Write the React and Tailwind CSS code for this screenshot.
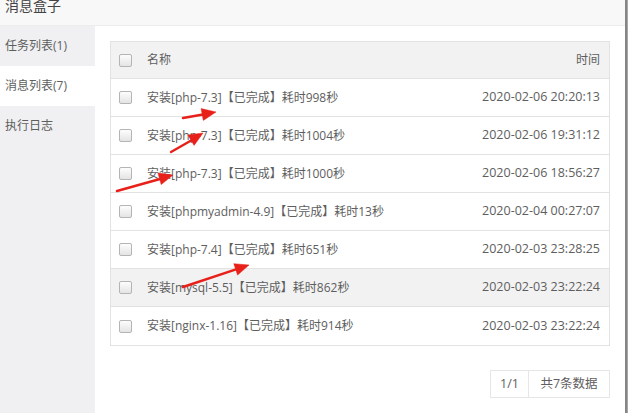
import React from 'react'

const rows = [
  { name: '安装[php-7.3]【已完成】耗时998秒', time: '2020-02-06 20:20:13' },
  { name: '安装[php-7.3]【已完成】耗时1004秒', time: '2020-02-06 19:31:12' },
  { name: '安装[php-7.3]【已完成】耗时1000秒', time: '2020-02-06 18:56:27' },
  { name: '安装[phpmyadmin-4.9]【已完成】耗时13秒', time: '2020-02-04 00:27:07' },
  { name: '安装[php-7.4]【已完成】耗时651秒', time: '2020-02-03 23:28:25' },
  { name: '安装[mysql-5.5]【已完成】耗时862秒', time: '2020-02-03 23:22:24', hover: true },
  { name: '安装[nginx-1.16]【已完成】耗时914秒', time: '2020-02-03 23:22:24' },
]

const tabs = [
  { label: '任务列表(1)' },
  { label: '消息列表(7)', active: true },
  { label: '执行日志' },
]

function Checkbox() {
  return (
    <span className="block h-[13px] w-[13px] rounded-[2px] border border-[#b4b4b4] bg-gradient-to-b from-[#fdfdfd] to-[#e4e4e4]" />
  )
}

// red annotation arrows: [tailX, tailY, baseX, baseY, headPoints]
const arrows = [
  [183, 118, 203, 114.5, '216,112 203.3,120.4 201.1,108.6'],
  [171, 152, 192, 140, '203,133 194.1,145.4 187.9,135'],
  [117, 191, 160, 179, '173,175 161.2,184.6 157.9,173.1'],
  [183, 287, 236, 269.4, '249,265 237.6,275.1 233.8,263.7'],
]

export default function App() {
  return (
    <div className="relative flex h-[413px] w-[628px] overflow-hidden bg-white text-[12px] text-[#5e5e5e]" style={{ fontFamily: '"Open Sans", "Noto Sans CJK SC", sans-serif' }}>
      <div className="flex w-[625px] flex-col">
        <div className="h-[26px] shrink-0 overflow-hidden border-b border-[#ececec] bg-[#f8f8f8] px-[5px]">
          <div className="-mt-[4px] text-[14px] leading-[20px] text-[#444]">消息盒子</div>
        </div>
        <div className="flex flex-1">
          <div className="w-[95px] shrink-0 bg-[#f0f0f2]">
            {tabs.map((t) => (
              <div
                key={t.label}
                className={`flex h-[40px] items-center px-[5px] text-[12px] ${t.active ? 'bg-white' : ''}`}
              >
                {t.label}
              </div>
            ))}
          </div>
          <div className="flex flex-1 flex-col p-[15px]">
            <div className="border border-[#e2e2e2]">
              <div className="flex h-[37px] items-center border-b border-[#e2e2e2] bg-[#f2f2f2]">
                <div className="flex w-[36px] pl-[8px]">
                  <Checkbox />
                </div>
                <div className="flex-1">名称</div>
                <div className="pr-[9px]">时间</div>
              </div>
              {rows.map((r, i) => (
                <div
                  key={i}
                  className={`flex h-[38px] items-center ${i < rows.length - 1 ? 'border-b border-[#e2e2e2]' : ''} ${r.hover ? 'bg-[#f2f2f2]' : ''}`}
                >
                  <div className="flex w-[36px] pl-[8px]">
                    <Checkbox />
                  </div>
                  <div className="flex-1">{r.name}</div>
                  <div className="pr-[9px] text-[12.5px]">{r.time}</div>
                </div>
              ))}
            </div>
            <div className="mt-[24px] flex justify-end">
              <div className="flex h-[28px] border border-[#e6e6e6] text-[12.5px]">
                <div className="flex w-[38px] items-center justify-center border-r border-[#e6e6e6]">1/1</div>
                <div className="flex w-[80px] items-center justify-center">共7条数据</div>
              </div>
            </div>
          </div>
        </div>
      </div>
      <div className="w-[3px] border-l-2 border-[#858585] bg-[#a8a8a8]" />

      <svg className="pointer-events-none absolute inset-0" width="628" height="413" viewBox="0 0 628 413">
        {arrows.map(([x1, y1, x2, y2, pts], i) => (
          <g key={i} fill="#e8201a" stroke="#e8201a">
            <line x1={x1} y1={y1} x2={x2} y2={y2} strokeWidth="2.5" strokeLinecap="round" />
            <polygon points={pts} strokeWidth="0.5" />
          </g>
        ))}
      </svg>
    </div>
  )
}
